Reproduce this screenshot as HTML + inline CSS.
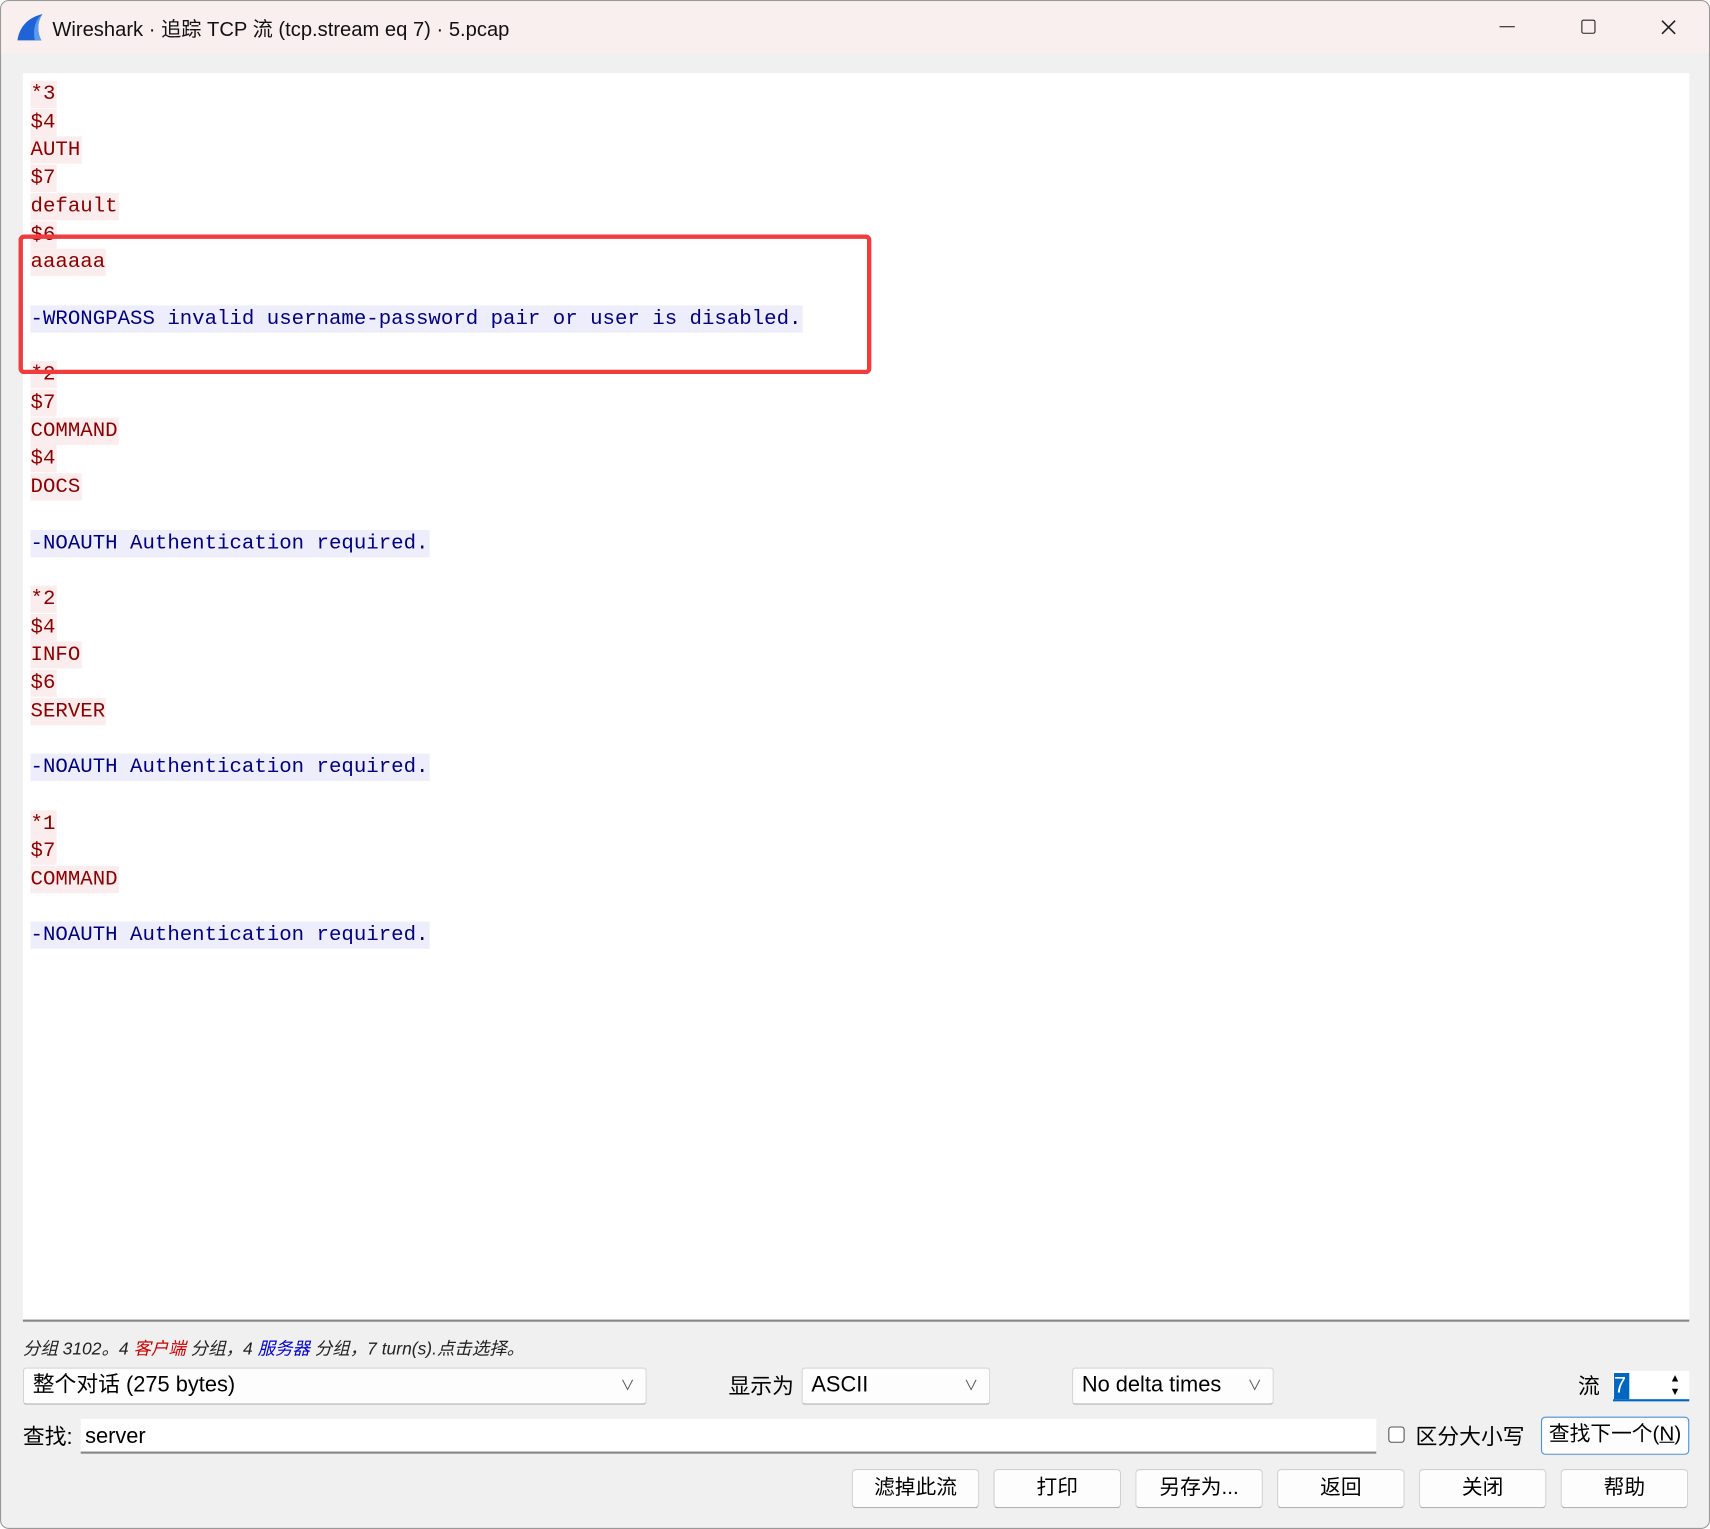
<!DOCTYPE html>
<html><head><meta charset="utf-8"><style>
*{margin:0;padding:0;box-sizing:border-box}
html,body{width:1710px;height:1529px;overflow:hidden;background:#fff}
#w{position:absolute;left:0;top:0;width:1568px;height:1402px;transform:scale(1.09056);transform-origin:0 0;background:#f0f0f0;border:1px solid #999;border-radius:8px;overflow:hidden;font-family:"Liberation Sans","Noto Sans CJK SC",sans-serif;color:#000}
.abs{position:absolute}
#tb{left:0;top:0;width:1568px;height:48px;background:#f8efee}
#tt{left:47px;top:12px;font-size:18.5px;color:#111}
#ta{left:20px;top:66px;width:1528px;height:1145px;background:#fff;border-bottom:2px solid #888}
.ln{position:absolute;left:7px;height:25px;font-family:"Liberation Mono",monospace;font-size:19px;line-height:25px;white-space:pre;padding:0 1px 0 0}
.c{color:#8b0000;background:#fbeded}
.s{color:#000080;background:#ededfb}
.box{background:#fdfdfd;border:1px solid #d4d4d4;border-bottom-color:#aaa;border-radius:3px;font-size:20px;line-height:31px;padding-left:8px}
.btn{background:#fdfdfd;border:1px solid #d0d0d0;border-bottom-color:#aaa;border-radius:4px;font-size:19px;text-align:center;line-height:34px;top:1346px;width:117px;height:36px}
.arr{position:absolute;right:10px;top:0;font-size:13px;color:#555}
</style></head><body><div id="w">
<div id="tb" class="abs"></div>
<svg class="abs" style="left:13px;top:11px" width="26" height="26" viewBox="0 0 26 26"><path d="M25 1 C12 4 4 12 2 25 L24 25 C20 18 20 8 25 1Z" fill="#1f63d6"/><path d="M25 1 C18 6 16 16 18 25 L24 25 C20 18 20 8 25 1Z" fill="#5a9cf0"/></svg>
<div id="tt" class="abs">Wireshark · 追踪 TCP 流 (tcp.stream eq 7) · 5.pcap</div>
<div class="abs" style="left:1374px;top:23px;width:14px;height:1px;background:#222"></div>
<div class="abs" style="left:1449px;top:17px;width:13px;height:13px;border:1.5px solid #222;border-radius:2px"></div>
<svg class="abs" style="left:1522px;top:17px" width="14" height="14"><path d="M1 1L13 13M13 1L1 13" stroke="#222" stroke-width="1.5"/></svg>
<div id="ta" class="abs">
<div class="ln c" style="top:7px">*3</div>
<div class="ln c" style="top:33px">$4</div>
<div class="ln c" style="top:58px">AUTH</div>
<div class="ln c" style="top:84px">$7</div>
<div class="ln c" style="top:110px">default</div>
<div class="ln c" style="top:136px">$6</div>
<div class="ln c" style="top:161px">aaaaaa</div>
<div class="ln s" style="top:213px">-WRONGPASS invalid username-password pair or user is disabled.</div>
<div class="ln c" style="top:264px">*2</div>
<div class="ln c" style="top:290px">$7</div>
<div class="ln c" style="top:316px">COMMAND</div>
<div class="ln c" style="top:341px">$4</div>
<div class="ln c" style="top:367px">DOCS</div>
<div class="ln s" style="top:419px">-NOAUTH Authentication required.</div>
<div class="ln c" style="top:470px">*2</div>
<div class="ln c" style="top:496px">$4</div>
<div class="ln c" style="top:521px">INFO</div>
<div class="ln c" style="top:547px">$6</div>
<div class="ln c" style="top:573px">SERVER</div>
<div class="ln s" style="top:624px">-NOAUTH Authentication required.</div>
<div class="ln c" style="top:676px">*1</div>
<div class="ln c" style="top:701px">$7</div>
<div class="ln c" style="top:727px">COMMAND</div>
<div class="ln s" style="top:778px">-NOAUTH Authentication required.</div>
</div>
<div class="abs" style="left:16px;top:214px;width:782px;height:128px;border:4px solid #f03c3c;border-radius:5px"></div>
<div class="abs" style="left:20px;top:1222px;font-size:16px;font-style:italic;color:#222">分组 3102。4 <span style="color:#c00">客户端</span> 分组，4 <span style="color:#00c">服务器</span> 分组，7 turn(s).点击选择。</div>
<div class="abs box" style="left:20px;top:1253px;width:572px;height:34px">整个对话 (275 bytes)<span class="arr">∨</span></div>
<div class="abs" style="left:667px;top:1254px;font-size:20px">显示为</div>
<div class="abs box" style="left:734px;top:1253px;width:173px;height:34px">ASCII<span class="arr">∨</span></div>
<div class="abs box" style="left:982px;top:1253px;width:185px;height:34px">No delta times<span class="arr">∨</span></div>
<div class="abs" style="left:1446px;top:1254px;font-size:20px">流</div>
<div class="abs" style="left:1478px;top:1256px;width:70px;height:28px;background:#fff;border-bottom:2px solid #0067c0"></div>
<div class="abs" style="left:1479px;top:1258px;width:14px;height:24px;background:#0067c0;color:#fff;font-size:20px;line-height:24px">7</div>
<div class="abs" style="left:1530px;top:1258px;font-size:10px;line-height:12px">▲<br>▼</div>
<div class="abs" style="left:20px;top:1300px;font-size:20px">查找:</div>
<div class="abs" style="left:73px;top:1300px;width:1188px;height:32px;background:#fff;border-bottom:2px solid #888;font-size:20px;line-height:32px;padding-left:4px">server</div>
<div class="abs" style="left:1272px;top:1307px;width:15px;height:15px;border:1px solid #555;border-radius:3px;background:#fff"></div>
<div class="abs" style="left:1297px;top:1300px;font-size:20px">区分大小写</div>
<div class="abs btn" style="left:1412px;top:1298px;width:136px;height:35px;border:1.5px solid #4a8fd8;line-height:32px">查找下一个(<u>N</u>)</div>
<div class="abs btn" style="left:780px">滤掉此流</div>
<div class="abs btn" style="left:910px">打印</div>
<div class="abs btn" style="left:1040px">另存为...</div>
<div class="abs btn" style="left:1170px">返回</div>
<div class="abs btn" style="left:1300px">关闭</div>
<div class="abs btn" style="left:1430px">帮助</div>
</div></body></html>
